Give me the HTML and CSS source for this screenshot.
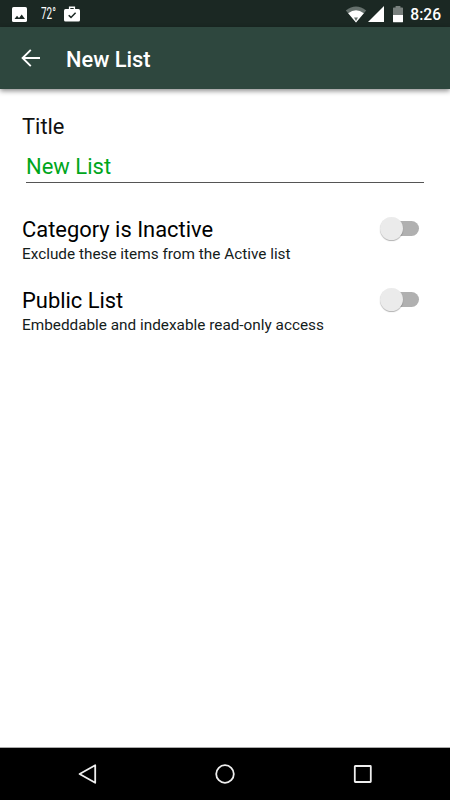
FILE: index.html
```
<!DOCTYPE html>
<html lang="en">
<head>
    <meta charset="UTF-8">
    <meta name="viewport" content="width=device-width, initial-scale=1.0">
    <title>New List</title>
    <link rel="stylesheet" href="styles.css">
</head>
<body>
    <div class="status-bar">
        <svg class="icon-picture" width="15" height="15" viewBox="0 0 15 15">
            <rect width="15" height="15" rx="1.6" fill="#fff"/>
            <path d="M2.5 12 5 8.8l2 2.2 2.7-3.6L13 12z" fill="#1b2823"/>
        </svg>
        <span class="temperature">72°</span>
        <svg class="icon-case" width="16" height="16" viewBox="0 0 16 16">
            <path d="M5.6 3V1.2h4.8V3" fill="none" stroke="#fff" stroke-width="1.4"/>
            <rect y="3" width="16" height="12.5" rx="1.5" fill="#fff"/>
            <path d="M4.7 9.2 7 11.4l4.6-4.7" fill="none" stroke="#1b2823" stroke-width="1.5"/>
        </svg>
        <div class="status-right">
            <svg width="22" height="17" viewBox="0 0 22 17">
                <path d="M.8 4.5Q11-3.5 21.2 4.5L11 16.5z" fill="#65706c"/>
                <path d="M3.2 7.3Q11 1.2 18.8 7.3L11 16.5z" fill="#fff"/>
                <path d="M9 11.5h4l-2 3.5z" fill="#65706c"/>
            </svg>
            <svg class="icon-signal" width="16" height="16" viewBox="0 0 16 16">
                <path d="M16 0v16H0z" fill="#fff"/>
            </svg>
            <svg class="icon-battery" width="10" height="17" viewBox="0 0 10 17">
                <path d="M0 9V2.2Q0 1.5.7 1.5H2.6V0h4.8v1.5h1.9q.7 0 .7.7V9z" fill="#78807d"/>
                <path d="M0 9h10v6.4q0 .9-.9.9H.9q-.9 0-.9-.9z" fill="#fff"/>
            </svg>
            <span class="clock">8:26</span>
        </div>
    </div>
    <header class="toolbar">
        <svg width="20" height="18" viewBox="0 0 20 18">
            <path d="M9.8.9 1.6 9l8.2 8.1M1.8 9H19" fill="none" stroke="#fff" stroke-width="1.9"/>
        </svg>
        <h1>New List</h1>
    </header>
    <form class="content">
        <label class="title-label" for="title">Title</label>
        <input type="text" id="title" name="title" value="New List">
        <div class="setting">
            <div>
                <div class="name">Category is Inactive</div>
                <div class="description">Exclude these items from the Active list</div>
            </div>
            <div class="switch"><div class="thumb"></div></div>
        </div>
        <div class="setting">
            <div>
                <div class="name">Public List</div>
                <div class="description">Embeddable and indexable read-only access</div>
            </div>
            <div class="switch"><div class="thumb"></div></div>
        </div>
    </form>
    <nav class="nav-bar">
        <svg width="20" height="20" viewBox="0 0 20 20">
            <path d="M18.2 1.2v17.6L2.6 10z"/>
        </svg>
        <svg width="20" height="20" viewBox="0 0 20 20">
            <circle cx="10" cy="10" r="8.8"/>
        </svg>
        <svg width="20" height="20" viewBox="0 0 20 20">
            <rect x="1.8" y="2" width="16" height="16" rx=".5"/>
        </svg>
    </nav>
</body>
</html>
```

FILE: styles.css
```
* {
    box-sizing: border-box;
}
body {
    display: flex;
    flex-direction: column;
    height: 800px;
    margin: 0;
    background: #fff;
    color: #000;
    font-family: Roboto, sans-serif;
}
svg {
    display: block;
    flex: none;
}
.status-bar {
    display: flex;
    align-items: center;
    height: 27px;
    padding: 1px 9px 0 12px;
    background: #1b2823;
    color: #fff;
}
.temperature {
    width: 15px;
    margin: 0 8px 0 14px;
    font-size: 16px;
    line-height: 26px;
    transform: scaleX(0.62);
    transform-origin: left;
}
.icon-case {
    margin-bottom: 1px;
}
.status-right {
    display: flex;
    align-items: center;
    margin-left: auto;
}
.icon-signal {
    margin-left: 1px;
}
.icon-battery {
    margin-left: 9px;
}
.clock {
    margin: 1px 0 0 7px;
    font-size: 15.6px;
    font-weight: 500;
    line-height: 26px;
}
.toolbar {
    display: flex;
    align-items: center;
    height: 62px;
    padding: 0 21px;
    background: #2e473e;
    box-shadow: 0 2px 5px rgba(0, 0, 0, 0.45);
}
.toolbar h1 {
    margin: 3px 0 0 25px;
    color: #fff;
    font-size: 21.8px;
    font-weight: 500;
    line-height: 28px;
}
.content {
    display: flex;
    flex: 1;
    flex-direction: column;
    padding: 24px 26px 0 22px;
    border-bottom: 1px solid #aaa;
}
.title-label {
    font-size: 21.9px;
    line-height: 28px;
    color: #111;
}
input[type="text"] {
    height: 33px;
    margin: 9px 0 33px 4px;
    padding: 0;
    border: 0;
    border-bottom: 1px solid #555;
    background: none;
    color: #00a61c;
    font-family: inherit;
    font-size: 22px;
    outline: none;
}
.setting {
    display: flex;
    justify-content: space-between;
    height: 71.4px;
}
.name {
    font-size: 21.9px;
    line-height: 28px;
}
.description {
    color: #14201b;
    font-size: 15.33px;
    line-height: 20px;
}
.switch {
    display: flex;
    width: 34px;
    height: 15px;
    margin: 5px 5px 0 0;
    border-radius: 8px;
    background: #b0b0b0;
}
.thumb {
    width: 23px;
    height: 23px;
    margin: -4px 0 0 -5px;
    border-radius: 50%;
    background: #ebebeb;
    box-shadow: 0 1px 1px rgba(0, 0, 0, 0.3);
}
.nav-bar {
    display: flex;
    align-items: center;
    justify-content: space-between;
    height: 52px;
    padding: 0 77px;
    background: #000;
}
.nav-bar svg {
    fill: none;
    stroke: #eee;
    stroke-width: 1.8;
    stroke-linejoin: round;
}
```
